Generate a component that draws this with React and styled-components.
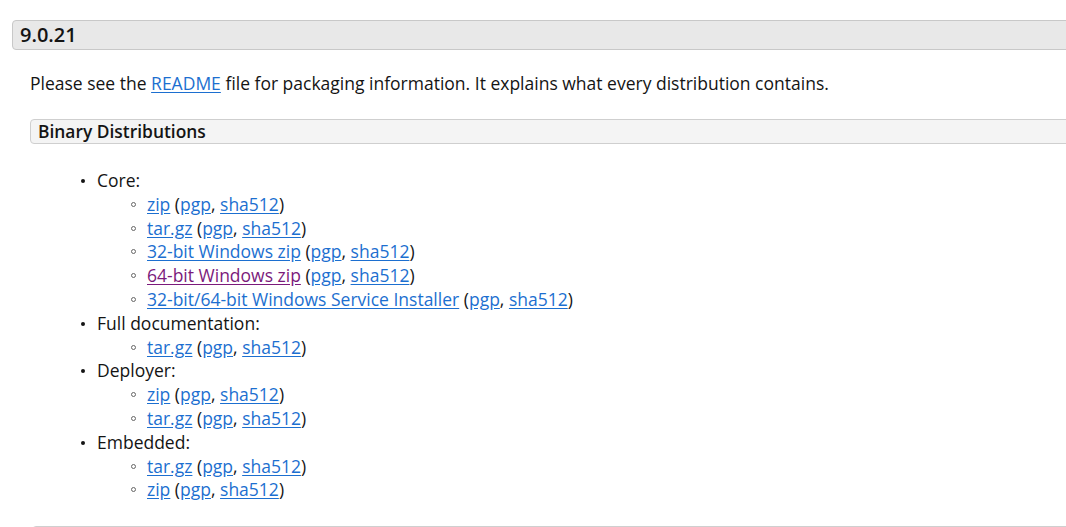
import React from "react";
import styled, { createGlobalStyle } from "styled-components";

const Global = createGlobalStyle`
  html, body { margin: 0; padding: 0; background: #fff; }
  body { font-family: "Open Sans", "DejaVu Sans", sans-serif; color: #141414; overflow: hidden; }
`;

const Page = styled.div`
  padding: 20px 0 0 12px;
  width: 1100px;
`;

const VersionHeader = styled.h3`
  margin: 0;
  height: 28px;
  line-height: 28px;
  padding-left: 7px;
  border: 1px solid #c8c8c8;
  border-radius: 4px;
  background: #e8e8e8;
  font-size: 20px;
  font-weight: 600;
`;

const Section = styled.div`
  padding-left: 18px;
`;

const Para = styled.p`
  margin: 21px 0 0 0;
  font-size: 17.5px;
  line-height: 24px;
`;

const SubHeader = styled.h4`
  margin: 24px 0 0 0;
  height: 23px;
  line-height: 23px;
  padding-left: 7px;
  border: 1px solid #cfcfcf;
  border-radius: 4px;
  background: #f4f4f4;
  font-size: 17.4px;
  font-weight: 600;
`;

const Link = styled.a`
  color: ${(p) => (p.$visited ? "#7b1a7b" : "#1c6fd0")};
  text-decoration: underline;
  text-underline-offset: 2px;
`;

const List = styled.ul`
  margin: ${(p) => (p.$nested ? "0" : "25px 0 0 0")};
  padding-left: ${(p) => (p.$nested ? "50px" : "67px")};
  list-style: none;
  font-size: 17.5px;
  line-height: 23.8px;
`;

const Item = styled.li`
  &::before {
    content: "";
    display: inline-block;
    box-sizing: border-box;
    width: ${(p) => (p.$hollow ? "5px" : "4px")};
    height: ${(p) => (p.$hollow ? "5px" : "4px")};
    border-radius: 50%;
    background: ${(p) => (p.$hollow ? "transparent" : "#141414")};
    border: ${(p) => (p.$hollow ? "1px solid #666" : "none")};
    margin-left: -16px;
    margin-right: ${(p) => (p.$hollow ? "11px" : "12px")};
    vertical-align: 4px;
  }
`;

const Footer = styled.div`
  margin-top: 24px;
  margin-left: 2px;
  height: 24px;
  border: 1px solid #cfcfcf;
  border-radius: 4px;
  background: #f4f4f4;
`;

function Dl({ name, visited }) {
  return (
    <Item $hollow>
      <Link href="#" $visited={visited}>{name}</Link> (
      <Link href="#">pgp</Link>, <Link href="#">sha512</Link>)
    </Item>
  );
}

const groups = [
  { title: "Core:", items: ["zip", "tar.gz", "32-bit Windows zip", ["64-bit Windows zip", true], "32-bit/64-bit Windows Service Installer"] },
  { title: "Full documentation:", items: ["tar.gz"] },
  { title: "Deployer:", items: ["zip", "tar.gz"] },
  { title: "Embedded:", items: ["tar.gz", "zip"] },
];

export default function App() {
  return (
    <>
      <Global />
      <Page>
        <VersionHeader>9.0.21</VersionHeader>
        <Section>
          <Para>
            Please see the <Link href="#">README</Link> file for packaging information. It explains what every distribution contains.
          </Para>
          <SubHeader>Binary Distributions</SubHeader>
          <List>
            {groups.map((g) => (
              <Item key={g.title}>
                {g.title}
                <List $nested>
                  {g.items.map((it, i) => {
                    const [n, v] = Array.isArray(it) ? it : [it, false];
                    return <Dl key={i} name={n} visited={v} />;
                  })}
                </List>
              </Item>
            ))}
          </List>
          <Footer />
        </Section>
      </Page>
    </>
  );
}
